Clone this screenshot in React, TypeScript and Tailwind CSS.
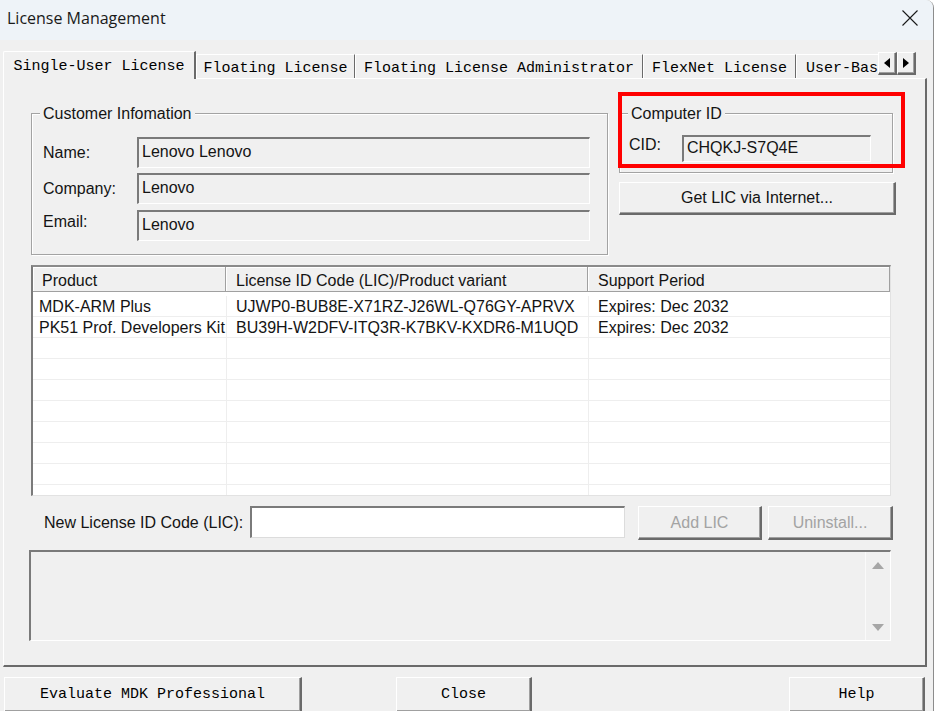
import React from "react";

const raised =
  "bg-[#f0f0f0] border-t border-l border-t-white border-l-white border-r-2 border-b-2 border-r-[#6a6a6a] border-b-[#6a6a6a] shadow-[inset_-1px_-1px_0_#a0a0a0]";
const sunken =
  "border-t-2 border-l-2 border-t-[#7a7a7a] border-l-[#7a7a7a] border-r border-b border-r-white border-b-white";
const groupBox =
  "relative border border-[#a3a3a3] shadow-[1px_1px_0_#ffffff,inset_1px_1px_0_#ffffff]";
const mono = "font-['Liberation_Mono','Courier_New',monospace] text-[15px] text-black";

function Legend({ children }: { children: React.ReactNode }) {
  return (
    <span className="absolute -top-[10px] left-[8px] px-[3px] bg-[#f0f0f0] leading-[20px] whitespace-nowrap">
      {children}
    </span>
  );
}

function Field({ value, w, h }: { value: string; w: string; h: string }) {
  return (
    <div className={`${w} ${h} ${sunken} bg-[#f0f0f0] flex items-center pl-[3px] pb-[2px] whitespace-nowrap`}>
      {value}
    </div>
  );
}

export default function App() {
  const rows: [string, string, string][] = [
    ["MDK-ARM Plus", "UJWP0-BUB8E-X71RZ-J26WL-Q76GY-APRVX", "Expires: Dec 2032"],
    ["PK51 Prof. Developers Kit", "BU39H-W2DFV-ITQ3R-K7BKV-KXDR6-M1UQD", "Expires: Dec 2032"],
  ];
  for (let i = 0; i < 9; i++) rows.push(["", "", ""]);

  return (
    <div className="w-[939px] h-[711px] bg-white overflow-hidden flex font-['Liberation_Sans',Arial,sans-serif] text-[16px] text-[#141414]">
      <div className="w-[934px] h-full shrink-0 bg-[#f0f0f0] border-r border-[#8c8c8c] rounded-tr-[8px] flex flex-col overflow-hidden">
        {/* Title bar */}
        <div className="h-[40px] shrink-0 bg-[#eef3f8] flex items-center justify-between pl-[7px] pr-[15px] pb-[5px]">
          <span className="font-['Open_Sans',sans-serif] text-[16px] text-[#1a1a1a]">License Management</span>
          <svg width="16" height="16" viewBox="0 0 16 16" className="mt-[1px]">
            <path d="M0.5 0.5 L15.5 15.5 M15.5 0.5 L0.5 15.5" stroke="#1a1a1a" strokeWidth="1.1" fill="none" />
          </svg>
        </div>

        {/* Tab strip */}
        <div className={`h-[38px] shrink-0 flex pl-[3px] ${mono}`}>
          <div className="w-[875px] flex items-end">
            <div className="relative z-10 -mb-px h-[28px] w-[193px] shrink-0 bg-[#f0f0f0] border-t border-l border-t-white border-l-white border-r-2 border-r-[#6a6a6a] rounded-tl-[2px] flex items-center justify-center pt-[3px] whitespace-nowrap">
              Single-User License
            </div>
            <div className="h-[24px] w-[159px] shrink-0 border-t border-l border-t-white border-l-white border-r border-r-[#6a6a6a] flex items-center justify-center pt-[5px] whitespace-nowrap">
              Floating License
            </div>
            <div className="h-[24px] w-[288px] shrink-0 border-t border-l border-t-white border-l-white border-r border-r-[#6a6a6a] flex items-center justify-center pt-[5px] whitespace-nowrap">
              Floating License Administrator
            </div>
            <div className="h-[24px] w-[153px] shrink-0 border-t border-l border-t-white border-l-white border-r border-r-[#6a6a6a] flex items-center justify-center pt-[5px] whitespace-nowrap">
              FlexNet License
            </div>
            <div className="h-[24px] w-[82px] shrink-0 border-t border-l border-t-white border-l-white overflow-hidden flex items-center pl-[9px] pt-[5px] whitespace-nowrap">
              User-Bas
            </div>
          </div>
          <div className="flex mt-[12px] h-[23px]">
            <div className={`w-[19px] h-[23px] ${raised} flex items-center justify-center`}>
              <svg width="6" height="10" viewBox="0 0 6 10">
                <polygon points="6,0 0,5 6,10" fill="#000" />
              </svg>
            </div>
            <div className={`w-[19px] h-[23px] ${raised} flex items-center justify-center`}>
              <svg width="6" height="10" viewBox="0 0 6 10">
                <polygon points="0,0 6,5 0,10" fill="#000" />
              </svg>
            </div>
          </div>
        </div>

        {/* Tab panel */}
        <div className="ml-[3px] w-[924px] h-[589px] shrink-0 relative bg-[#f0f0f0] border-t border-l border-t-white border-l-white border-r-2 border-b-2 border-r-[#6a6a6a] border-b-[#6a6a6a] flex flex-col pt-[34px]">
          {/* top row */}
          <div className="flex ml-[27px]">
            <div className={`w-[577px] h-[142px] ${groupBox}`}>
              <Legend>Customer Infomation</Legend>
              <div className="flex flex-col pt-[23px]">
                <div className="flex items-center h-[31px]">
                  <span className="w-[105px] pl-[11px]">Name:</span>
                  <Field value="Lenovo Lenovo" w="w-[453px]" h="h-[31px]" />
                </div>
                <div className="flex items-center h-[31px] mt-[5px]">
                  <span className="w-[105px] pl-[11px]">Company:</span>
                  <Field value="Lenovo" w="w-[453px]" h="h-[31px]" />
                </div>
                <div className="flex items-center h-[31px] mt-[6px]">
                  <span className="w-[105px] pl-[11px] mb-[8px]">Email:</span>
                  <Field value="Lenovo" w="w-[453px]" h="h-[31px]" />
                </div>
              </div>
            </div>

            <div className="ml-[11px] flex flex-col">
              <div className={`w-[274px] h-[60px] ${groupBox}`}>
                <Legend>Computer ID</Legend>
                <div className="flex items-center pt-[19px]">
                  <span className="w-[62px] pl-[9px] mb-[6px]">CID:</span>
                  <Field value="CHQKJ-S7Q4E" w="w-[189px]" h="h-[27px]" />
                </div>
              </div>
              <div className={`mt-[9px] w-[277px] h-[33px] ${raised} flex items-center justify-center`}>
                Get LIC via Internet...
              </div>
            </div>
          </div>

          {/* table */}
          <div className="ml-[27px] mt-[10px] w-[860px] h-[231px] bg-white border-t-2 border-l-2 border-t-[#8a8a8a] border-l-[#7a7a7a] border-r border-b border-r-[#e2e2e2] border-b-[#e2e2e2] overflow-hidden flex flex-col">
            <div className="flex h-[25px] shrink-0 bg-[#f0f0f0]">
              <div className="w-[193px] h-[25px] border-r border-b border-[#a0a0a0] shadow-[inset_1px_1px_0_#fff] flex items-center pl-[9px] pt-[3px]">Product</div>
              <div className="w-[362px] h-[25px] border-r border-b border-[#a0a0a0] shadow-[inset_1px_1px_0_#fff] flex items-center pl-[10px] pt-[3px] whitespace-nowrap">License ID Code (LIC)/Product variant</div>
              <div className="w-[302px] h-[25px] border-r border-b border-[#a0a0a0] shadow-[inset_1px_1px_0_#fff] flex items-center pl-[10px] pt-[3px]">Support Period</div>
            </div>
            <div className="flex flex-col pt-[4px]">
              {rows.map((r, i) => (
                <div key={i} className="flex h-[21px] shrink-0 border-b border-[#eeeeee]">
                  <div className="w-[194px] border-r border-[#eeeeee] pl-[6px] pt-[1px] flex items-center whitespace-nowrap">{r[0]}</div>
                  <div className="w-[362px] border-r border-[#eeeeee] pl-[9px] pt-[1px] flex items-center whitespace-nowrap">{r[1]}</div>
                  <div className="flex-1 pl-[9px] pt-[1px] flex items-center whitespace-nowrap">{r[2]}</div>
                </div>
              ))}
            </div>
          </div>

          {/* new LIC row */}
          <div className="flex items-center mt-[10px] h-[34px]">
            <span className="ml-[40px] w-[206px] whitespace-nowrap">New License ID Code (LIC):</span>
            <div className="self-start w-[375px] h-[32px] bg-white border-t-2 border-l-2 border-t-[#7a7a7a] border-l-[#7a7a7a] border-r border-b border-r-[#dcdcdc] border-b-[#dcdcdc]" />
            <div className={`ml-[13px] w-[124px] h-[34px] ${raised} flex items-center justify-center text-[#a3a3a3]`}>Add LIC</div>
            <div className={`ml-[6px] w-[125px] h-[34px] ${raised} flex items-center justify-center text-[#a3a3a3]`}>Uninstall...</div>
          </div>

          {/* text area */}
          <div className={`ml-[25px] mt-[10px] w-[862px] h-[91px] bg-[#f0f0f0] ${sunken} flex`}>
            <div className="flex-1" />
            <div className="w-[25px] border-l border-[#fafafa] flex flex-col items-center justify-between pt-[10px] pb-[9px]">
              <svg width="12" height="7" viewBox="0 0 12 7">
                <polygon points="6,0 12,7 0,7" fill="#a6a6a6" />
              </svg>
              <svg width="12" height="7" viewBox="0 0 12 7">
                <polygon points="0,0 12,0 6,7" fill="#a6a6a6" />
              </svg>
            </div>
          </div>

          {/* red annotation box */}
          <div className="absolute left-[614px] top-[13px] w-[287px] h-[76px] border-4 border-[#ff0000] pointer-events-none" />
        </div>

        {/* bottom buttons */}
        <div className={`flex mt-[10px] ${mono}`}>
          <div className={`ml-[4px] w-[298px] h-[36px] ${raised} flex items-center justify-center pt-[1px]`}>Evaluate MDK Professional</div>
          <div className={`ml-[94px] w-[136px] h-[36px] ${raised} flex items-center justify-center pt-[1px]`}>Close</div>
          <div className={`ml-[257px] w-[136px] h-[36px] ${raised} flex items-center justify-center pt-[1px]`}>Help</div>
        </div>
      </div>
    </div>
  );
}
